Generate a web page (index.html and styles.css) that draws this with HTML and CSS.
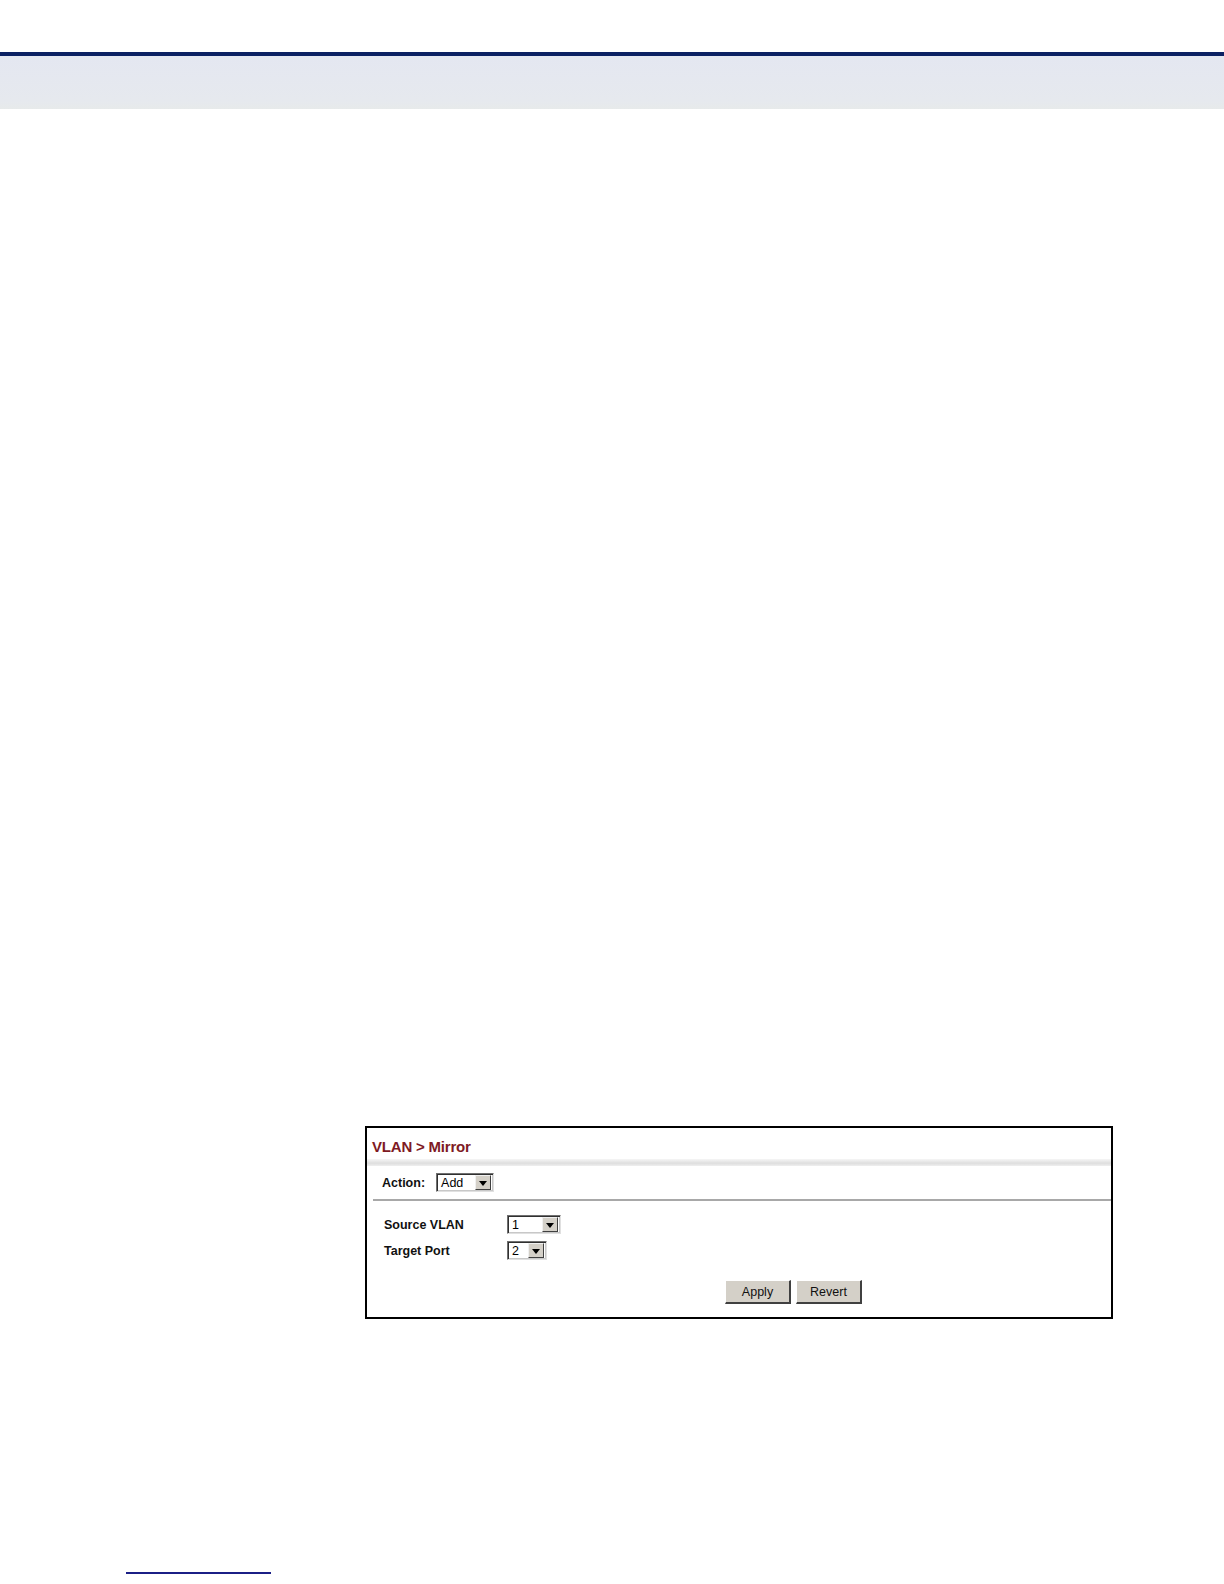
FILE: index.html
```html
<!DOCTYPE html>
<html>
<head>
<meta charset="utf-8">
<title>VLAN Mirror</title>
<link rel="stylesheet" href="styles.css">
</head>
<body>
<header class="page-head">
  <div class="topbar"></div>
  <div class="band"></div>
</header>
<main class="content">
  <div class="panel">
    <div class="title">VLAN &gt; Mirror</div>
    <div class="title-rule"></div>
    <div class="action-row">
      <span class="label">Action:</span>
      <span class="select w-action"><span class="value">Add</span><span class="arrow"><span class="tri"></span></span></span>
    </div>
    <div class="sep"></div>
    <div class="form">
      <div class="row">
        <span class="label field">Source VLAN</span>
        <span class="select w-vlan"><span class="value">1</span><span class="arrow"><span class="tri"></span></span></span>
      </div>
      <div class="row">
        <span class="label field">Target Port</span>
        <span class="select w-port"><span class="value">2</span><span class="arrow"><span class="tri"></span></span></span>
      </div>
    </div>
    <div class="buttons">
      <span class="btn">Apply</span>
      <span class="btn">Revert</span>
    </div>
  </div>
</main>
<footer class="page-foot">
  <div class="footline"></div>
</footer>
</body>
</html>
```
FILE: styles.css
```css
html, body {
  margin: 0;
  padding: 0;
  background: #ffffff;
  font-family: "Liberation Sans", Arial, sans-serif;
}
body {
  width: 1224px;
  height: 1584px;
  position: relative;
  overflow: hidden;
}
.page-head {
  padding-top: 52px;
}
.topbar {
  height: 4px;
  background: #0b2163;
}
.band {
  height: 53px;
  background: linear-gradient(#e4e7f1, #e6e9ee 85%, #e7eaea);
}
.content {
  padding-top: 1017px;
  padding-left: 365px;
}
.panel {
  width: 744px;
  height: 189px;
  border: 2px solid #000;
  display: flex;
  flex-direction: column;
}
.title {
  height: 31px;
  line-height: 37px;
  padding-left: 5px;
  font-size: 15px;
  font-weight: bold;
  color: #7e1a24;
  letter-spacing: -0.2px;
}
.title-rule {
  height: 7px;
  background: linear-gradient(#f6f6f6, #dedede 60%, #efefef);
}
.action-row {
  height: 33px;
  display: flex;
  align-items: center;
  padding-left: 15px;
  gap: 11px;
}
.label {
  font-size: 12.5px;
  font-weight: bold;
  color: #111;
}
.sep {
  margin-left: 6px;
  height: 2px;
  background: #a8a8a8;
}
.form {
  padding-top: 14px;
  padding-left: 17px;
  display: flex;
  flex-direction: column;
  gap: 7px;
}
.row {
  display: flex;
  align-items: center;
  height: 19px;
}
.field {
  width: 123px;
}
.select {
  box-sizing: border-box;
  height: 19px;
  display: inline-flex;
  align-items: center;
  background: #fff;
  border-top: 1px solid #707070;
  border-left: 1px solid #707070;
  border-right: 1px solid #e0e0e0;
  border-bottom: 1px solid #e0e0e0;
  box-shadow: inset 1px 1px 0 #303030, inset -1px -1px 0 #c8c8c8;
  padding: 1px 2px 1px 2px;
}
.w-action { width: 58px; }
.w-vlan { width: 54px; }
.w-port { width: 40px; }
.value {
  flex: 1;
  font-size: 12.5px;
  line-height: 15px;
  color: #000;
  padding-left: 2px;
  padding-top: 1px;
}
.arrow {
  width: 16px;
  height: 15px;
  box-sizing: border-box;
  background: #d4d0c8;
  border-top: 1px solid #f0f0f0;
  border-left: 1px solid #f0f0f0;
  border-right: 1px solid #404040;
  border-bottom: 1px solid #404040;
  display: flex;
  align-items: center;
  justify-content: center;
}
.tri {
  width: 0;
  height: 0;
  border-left: 4px solid transparent;
  border-right: 4px solid transparent;
  border-top: 5px solid #000;
  margin-top: 1px;
}
.buttons {
  padding-top: 20px;
  padding-left: 358px;
  display: flex;
  gap: 5px;
}
.btn {
  box-sizing: border-box;
  width: 66px;
  height: 24px;
  background: #d4d0c8;
  border-top: 1px solid #ffffff;
  border-left: 1px solid #ffffff;
  border-right: 2px solid #404040;
  border-bottom: 2px solid #404040;
  display: flex;
  align-items: center;
  justify-content: center;
  font-size: 12.5px;
  color: #111;
}
.page-foot {
  position: absolute;
  left: 126px;
  top: 1572px;
}
.footline {
  width: 145px;
  height: 2px;
  background: #1b1f86;
}
```
